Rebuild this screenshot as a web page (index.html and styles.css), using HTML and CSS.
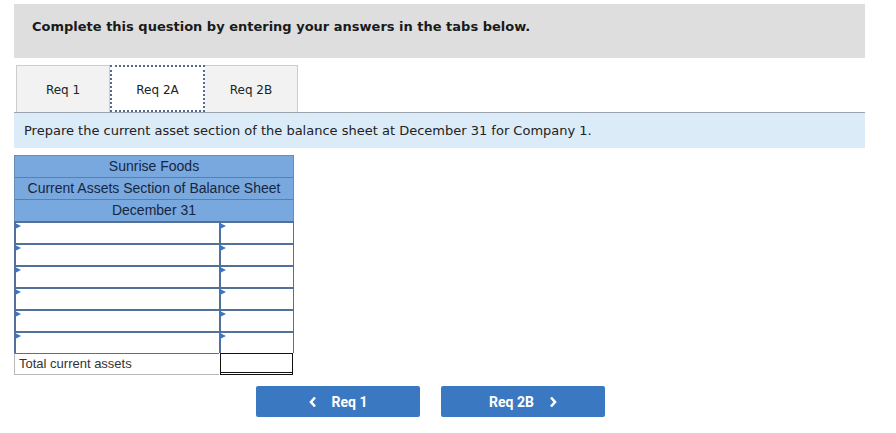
FILE: index.html
```html
<!DOCTYPE html>
<html>
<head>
<meta charset="utf-8">
<link rel="stylesheet" href="styles.css">
</head>
<body>
<div class="page">
  <div class="banner">Complete this question by entering your answers in the tabs below.</div>

  <div class="tabs">
    <div class="tab">Req 1</div>
    <div class="tab active">Req 2A</div>
    <div class="tab">Req 2B</div>
  </div>

  <div class="instruction">Prepare the current asset section of the balance sheet at December 31 for Company 1.</div>

  <div class="sheet">
    <div class="sheet-head">
      <div class="head-row">Sunrise Foods</div>
      <div class="head-row">Current Assets Section of Balance Sheet</div>
      <div class="head-row">December 31</div>
    </div>
    <div class="grid">
      <div class="cell"></div><div class="cell"></div>
      <div class="cell"></div><div class="cell"></div>
      <div class="cell"></div><div class="cell"></div>
      <div class="cell"></div><div class="cell"></div>
      <div class="cell"></div><div class="cell"></div>
      <div class="cell"></div><div class="cell"></div>
    </div>
    <div class="total-row">
      <div class="total-label">Total current assets</div>
      <div class="total-value"></div>
    </div>
  </div>

  <div class="nav">
    <button class="nav-btn">
      <svg class="chev" width="8" height="12" viewBox="0 0 8 12"><polyline points="6,1.5 2,6 6,10.5" fill="none" stroke="#fff" stroke-width="2.6"/></svg>
      <span>Req 1</span>
    </button>
    <button class="nav-btn">
      <span>Req 2B</span>
      <svg class="chev" width="8" height="12" viewBox="0 0 8 12"><polyline points="2,1.5 6,6 2,10.5" fill="none" stroke="#fff" stroke-width="2.6"/></svg>
    </button>
  </div>
</div>
</body>
</html>
```

FILE: styles.css
```css
* { box-sizing: border-box; }
html, body { margin: 0; padding: 0; background: #fff; }
body { font-family: "DejaVu Sans", Verdana, sans-serif; color: #222; }

.page {
  padding: 4px 31px 0 14px;
}

.banner {
  background: #dedede;
  height: 54px;
  padding: 14px 0 0 18px;
  font-size: 13px;
  font-weight: bold;
  color: #1a1a1a;
  line-height: 18px;
}

.tabs {
  display: flex;
  margin: 7px 0 0 2px;
  height: 47px;
}
.tab {
  width: 94px;
  height: 47px;
  background: #f2f2f2;
  border: 1px solid #cccccc;
  border-bottom: none;
  display: flex;
  align-items: center;
  justify-content: center;
  padding-top: 2px;
  font-size: 12px;
  color: #222;
}
.tab + .tab { border-left: none; }
.tab.active {
  width: 95px;
  background: #fff;
  border: 2px dotted #4f6c90;
}
.tab:last-child { width: 93px; }

.instruction {
  background: #dcebf8;
  border-top: 1px solid #9aa3ad;
  height: 36px;
  padding: 0 0 0 10px;
  display: flex;
  align-items: center;
  font-size: 13px;
  color: #222;
}

.sheet {
  margin-top: 7px;
  width: 280px;
  font-family: "Liberation Sans", Arial, sans-serif;
}
.sheet-head {
  background: #78a8de;
  border: 1px solid #6a8db5;
  border-bottom: none;
}
.head-row {
  height: 22px;
  line-height: 21px;
  text-align: center;
  font-size: 14px;
  color: #172640;
  border-bottom: 1px solid #5d7fa6;
}
.head-row:last-child {
  height: 21px;
  border-bottom: none;
}
.grid {
  display: grid;
  grid-template-columns: 203px 72px;
  grid-auto-rows: 20px;
  gap: 2px;
  padding: 2px 2px 0 2px;
  background: #52719a;
}
.cell {
  background: #fff;
  position: relative;
}
.cell::before {
  content: "";
  position: absolute;
  left: -1px;
  top: 0;
  border-left: 6px solid #3d76c0;
  border-top: 3px solid transparent;
  border-bottom: 3px solid transparent;
}
.total-row {
  display: grid;
  grid-template-columns: 205px 74px;
  height: 22px;
}
.total-label {
  border-left: 1px solid #b8b8b8;
  border-bottom: 1px solid #b8b8b8;
  border-top: 1px solid #52719a;
  font-size: 13px;
  color: #333;
  padding-left: 4px;
  line-height: 20px;
}
.total-value {
  border: 1px solid #111;
  border-bottom: 3px double #111;
  margin-left: 1px;
}

.nav {
  display: flex;
  gap: 21px;
  margin: 11px 0 0 242px;
}
.nav-btn {
  width: 164px;
  height: 31px;
  background: #3a78c2;
  border: none;
  border-radius: 2px;
  color: #fff;
  font-family: Roboto, "Liberation Sans", sans-serif;
  font-weight: 700;
  font-size: 14px;
  display: flex;
  align-items: center;
  justify-content: center;
  gap: 15px;
  padding: 0;
}
.chev { display: block; }
```
